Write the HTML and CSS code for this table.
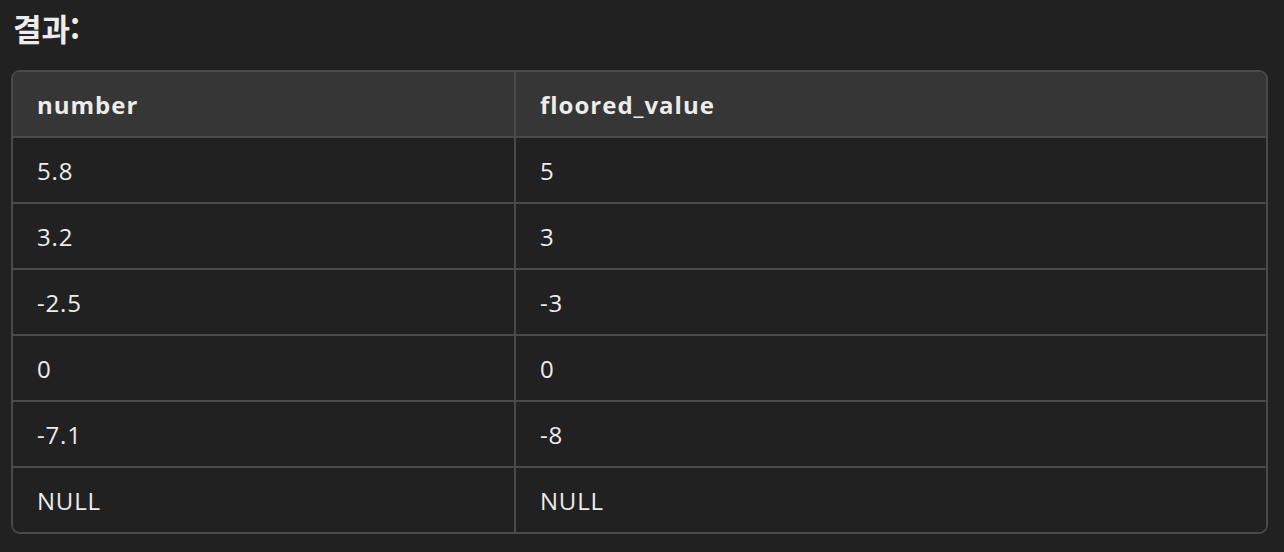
FILE: index.html
```html
<!DOCTYPE html>
<html lang="ko">
<head>
<meta charset="utf-8">
<link rel="stylesheet" href="styles.css">
</head>
<body>
<div class="page">
  <h3 class="title">결과:</h3>
  <div class="table-wrap">
    <table class="result">
      <thead>
        <tr><th>number</th><th>floored_value</th></tr>
      </thead>
      <tbody>
        <tr><td>5.8</td><td>5</td></tr>
        <tr><td>3.2</td><td>3</td></tr>
        <tr><td>-2.5</td><td>-3</td></tr>
        <tr><td>0</td><td>0</td></tr>
        <tr><td>-7.1</td><td>-8</td></tr>
        <tr><td>NULL</td><td>NULL</td></tr>
      </tbody>
    </table>
  </div>
</div>
</body>
</html>
```

FILE: styles.css
```css
html, body {
  margin: 0;
  padding: 0;
  background: #212121;
}
.page {
  padding: 6px 16px 0 11px;
  font-family: "Open Sans", "Noto Sans", "Noto Sans CJK KR", sans-serif;
  color: #ececec;
}
.title {
  margin: 0 0 0 2px;
  height: 64px;
  font-family: "Noto Sans CJK KR", sans-serif;
  font-size: 31px;
  font-weight: 700;
  line-height: 44px;
}
.table-wrap {
  border: 2px solid #4a4a4a;
  border-radius: 9px;
  overflow: hidden;
}
.result {
  width: 100%;
  border-collapse: collapse;
  font-size: 24px;
  letter-spacing: 0.8px;
}
.result th, .result td {
  text-align: left;
  padding: 0 24px;
  height: 64px;
  border: 2px solid #4a4a4a;
}
.result th {
  background: #363636;
  font-weight: 700;
  letter-spacing: 1px;
}
.result td {
  background: #212121;
}
.result th:first-child, .result td:first-child {
  width: 453px;
  border-left: none;
}
.result th:last-child, .result td:last-child {
  border-right: none;
}
.result thead tr:first-child th {
  border-top: none;
}
.result tbody tr:last-child td {
  border-bottom: none;
}
```
